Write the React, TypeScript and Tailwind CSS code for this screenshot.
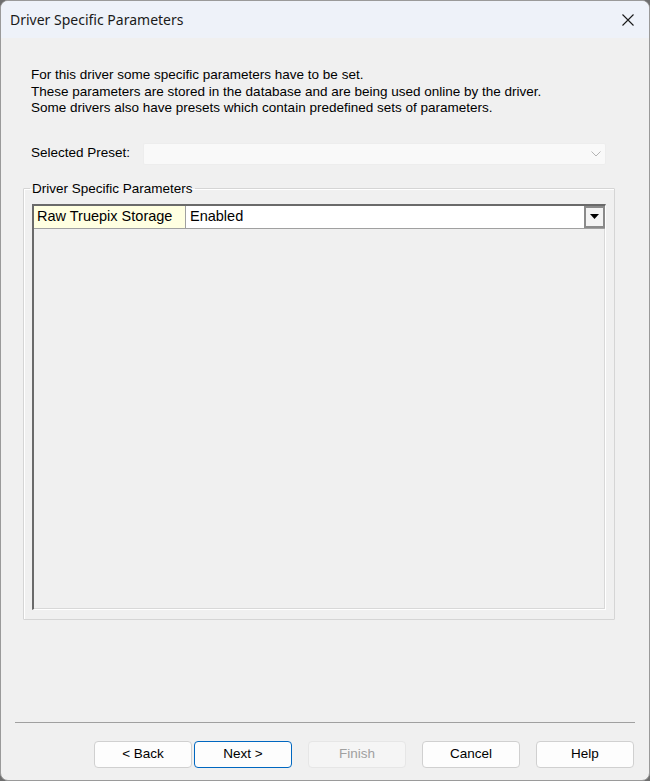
import React from "react";

const wizardButtons = [
  { label: "< Back", kind: "normal" },
  { label: "Next >", kind: "default" },
  { label: "Finish", kind: "disabled" },
  { label: "Cancel", kind: "normal" },
  { label: "Help", kind: "normal" },
] as const;

function CloseIcon() {
  return (
    <svg width="14" height="14" viewBox="0 0 14 14" fill="none">
      <path d="M1.5 1.5L12.5 12.5M12.5 1.5L1.5 12.5" stroke="#1a1a1a" strokeWidth="1.1" />
    </svg>
  );
}

function Chevron() {
  return (
    <svg width="10" height="6" viewBox="0 0 10 6" fill="none">
      <path d="M0.5 0.5L5 5L9.5 0.5" stroke="#b4b4b4" strokeWidth="1" />
    </svg>
  );
}

function DropArrow() {
  return (
    <svg width="9" height="5" viewBox="0 0 9 5">
      <path d="M0 0H9L4.5 5Z" fill="#000" />
    </svg>
  );
}

function WizardButton({ label, kind }: { label: string; kind: "normal" | "default" | "disabled" }) {
  const tone =
    kind === "default"
      ? "border-[#0067c0] bg-[#fdfdfd] text-black"
      : kind === "disabled"
        ? "border-[#e6e6e6] bg-[#f5f5f5] text-[#a0a0a0]"
        : "border-[#d0d0d0] bg-[#fdfdfd] text-black";
  return (
    <button
      disabled={kind === "disabled"}
      className={`h-[27px] w-[98px] rounded-[4px] border text-[13.5px] ${tone}`}
    >
      {label}
    </button>
  );
}

export default function App() {
  return (
    <div className="w-[650px] h-[781px] bg-[#6e6e6e]">
      <div
        className="w-[650px] h-[781px] flex flex-col overflow-hidden rounded-[8px] border border-[#9a9a9a] bg-[#f0f0f0] text-black"
        style={{ fontFamily: '"Liberation Sans", Arial, sans-serif' }}
      >
        {/* title bar */}
        <div className="h-[37px] shrink-0 flex items-center justify-between bg-[#eef2f9] pl-[9px] pr-[14px]">
          <span className="text-[14px] text-[#1a1a1a]" style={{ fontFamily: '"Noto Sans", sans-serif' }}>
            Driver Specific Parameters
          </span>
          <CloseIcon />
        </div>

        <div className="flex flex-col flex-1 px-[22px]">
          <div className="mt-[29px] pl-[8px] text-[13.5px] leading-[16.5px]">
            <p>For this driver some specific parameters have to be set.</p>
            <p>These parameters are stored in the database and are being used online by the driver.</p>
            <p>Some drivers also have presets which contain predefined sets of parameters.</p>
          </div>

          <div className="mt-[26px] flex items-center pl-[8px]">
            <span className="w-[112px] text-[13.5px]">Selected Preset:</span>
            <div className="h-[22px] w-[463px] flex items-center justify-end pr-[4px] bg-[#f9f9f9] border border-[#ededed] rounded-[2px]">
              <Chevron />
            </div>
          </div>

          <fieldset className="mt-[16px] w-[592px] h-[439px] border border-[#d5d5d5] shadow-[inset_1px_1px_0_#ffffff] rounded-[1px] px-[8px] pb-[9px]">
            <legend className="-ml-[2px] px-[2px] text-[13.5px] leading-[15px]">
              Driver Specific Parameters
            </legend>
            {/* property grid */}
            <div className="mt-[8px] h-[406px] flex flex-col border-l-2 border-t-2 border-[#6a6a6a] border-r border-b border-r-white border-b-white shadow-[inset_-1px_-1px_0_#d8d8d8]">
              <div className="h-[23px] flex border-b border-[#a0a0a0] text-[14.5px]">
                <div className="w-[152px] flex items-center pl-[3px] bg-[#ffffe1] border-r border-[#a0a0a0]">
                  Raw Truepix Storage
                </div>
                <div className="flex-1 flex items-center pl-[4px] bg-white">Enabled</div>
                <div className="w-[21px] flex items-center justify-center bg-[#f3f3f3] border-2 border-[#8a8a8a]">
                  <DropArrow />
                </div>
              </div>
            </div>
          </fieldset>
        </div>

        <div className="mx-[14px] h-0 border-t border-[#a0a0a0]" />

        <div className="h-[57px] shrink-0 flex items-start justify-end pt-[18px] pr-[15px]">
          <WizardButton {...wizardButtons[0]} />
          <div className="w-[2px]" />
          <WizardButton {...wizardButtons[1]} />
          <div className="w-[16px]" />
          <WizardButton {...wizardButtons[2]} />
          <div className="w-[16px]" />
          <WizardButton {...wizardButtons[3]} />
          <div className="w-[16px]" />
          <WizardButton {...wizardButtons[4]} />
        </div>
      </div>
    </div>
  );
}
